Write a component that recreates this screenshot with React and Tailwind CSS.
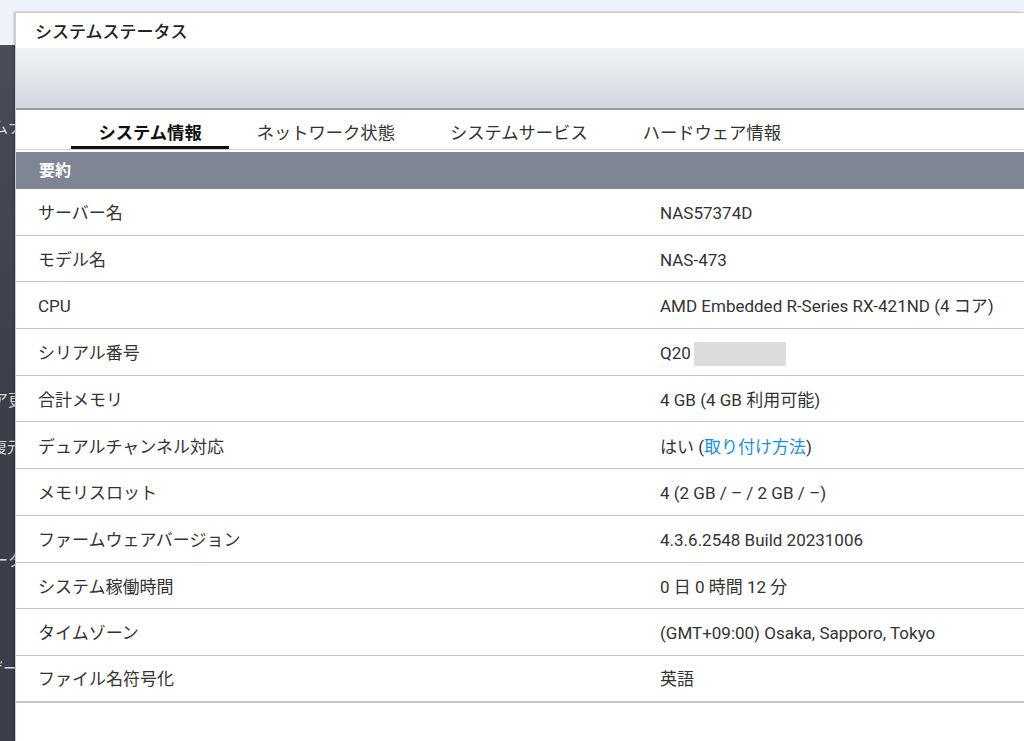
import React from "react";

const rows = [
  ["サーバー名", "NAS57374D"],
  ["モデル名", "NAS-473"],
  ["CPU", "AMD Embedded R-Series RX-421ND (4 コア)"],
  ["シリアル番号", "serial"],
  ["合計メモリ", "4 GB (4 GB 利用可能)"],
  ["デュアルチャンネル対応", "link"],
  ["メモリスロット", "4 (2 GB / – / 2 GB / –)"],
  ["ファームウェアバージョン", "4.3.6.2548 Build 20231006"],
  ["システム稼働時間", "0 日 0 時間 12 分"],
  ["タイムゾーン", "(GMT+09:00) Osaka, Sapporo, Tokyo"],
  ["ファイル名符号化", "英語"],
];

const tabs = ["システム情報", "ネットワーク状態", "システムサービス", "ハードウェア情報"];

function Value({ v }) {
  if (v === "serial")
    return (
      <span className="flex items-center">
        Q20<span className="ml-[3px] inline-block h-[24px] w-[92px] bg-[#dcdcdc]" />
      </span>
    );
  if (v === "link")
    return (
      <span>
        はい (<span className="text-[#1b8fd6]">取り付け方法</span>)
      </span>
    );
  return <span>{v}</span>;
}

export default function App() {
  return (
    <div
      className="flex h-[741px] w-[1024px] overflow-hidden bg-[#eef2f9] text-[#333]"
      style={{ fontFamily: 'Roboto, "Noto Sans CJK JP", sans-serif' }}
    >
      {/* left strip: clipped sidebar behind the dialog */}
      <div className="flex w-[15px] shrink-0 flex-col overflow-hidden">
        <div className="h-[45px] shrink-0 bg-[#eef2f9]" />
        <div className="flex flex-1 flex-col bg-gradient-to-b from-[#4a4d58] via-[#3c3f49] to-[#3c3f49] text-[16px] leading-none text-[#d4d6dc]">
          <div className="mt-[75px] flex justify-end whitespace-nowrap">
            <span className="mr-[-9px]">システムナ</span>
          </div>
          <div className="mt-[257px] flex justify-end whitespace-nowrap">
            <span className="mr-[-9px]">ファームア更</span>
          </div>
          <div className="mt-[31px] flex justify-end whitespace-nowrap">
            <span className="mr-[-8px]">バックアップ/復元</span>
          </div>
          <div className="mt-[97px] flex justify-end whitespace-nowrap">
            <span className="mr-[-9px]">外部デバイータ</span>
          </div>
          <div className="mt-[92px] flex justify-end whitespace-nowrap">
            <span className="mr-[-4px]">ユーザー</span>
          </div>
        </div>
      </div>

      {/* dialog */}
      <div className="mt-[12px] flex flex-1 flex-col border-l border-t border-[#c9ccd2] bg-white shadow-[-1px_0_2px_rgba(0,0,0,0.25)]">
        <div className="flex h-[35px] shrink-0 items-center pl-[19px] pt-[5px] text-[17px] font-medium text-[#222]">
          システムステータス
        </div>
        <div className="h-[62px] shrink-0 border-b-2 border-[#93979e] bg-gradient-to-b from-[#f0f2f5] to-[#d2d7de]" />
        <div className="flex h-[40px] shrink-0 items-stretch border-b border-[#cfcfcf] pl-[55px] text-[17.3px] text-[#333]">
          {tabs.map((t, i) => (
            <div
              key={t}
              className={
                i === 0
                  ? "flex items-center border-b-[3px] border-[#111] px-[27.5px] pt-[12px] font-bold text-[#111]"
                  : "flex items-center border-b-[3px] border-transparent px-[27.5px] pt-[12px]"
              }
            >
              {t}
            </div>
          ))}
        </div>
        <div className="mt-[2px] flex h-[37px] shrink-0 items-center bg-[#7f8595] pl-[23px] pt-[1px] text-[16px] font-bold text-white">
          要約
        </div>
        <div className="flex flex-col text-[17px] text-[#333]">
          {rows.map(([k, v], i) => (
            <div
              key={k}
              className={
                i === rows.length - 1
                  ? "flex h-[46.7px] items-center border-b-2 border-[#c4c4c4] pt-[4px]"
                  : "flex h-[46.7px] items-center border-b border-[#c4c4c4] pt-[4px]"
              }
            >
              <div className="w-[644px] shrink-0 pl-[22px]">{k}</div>
              <div className="flex-1">
                <Value v={v} />
              </div>
            </div>
          ))}
        </div>
      </div>
    </div>
  );
}
